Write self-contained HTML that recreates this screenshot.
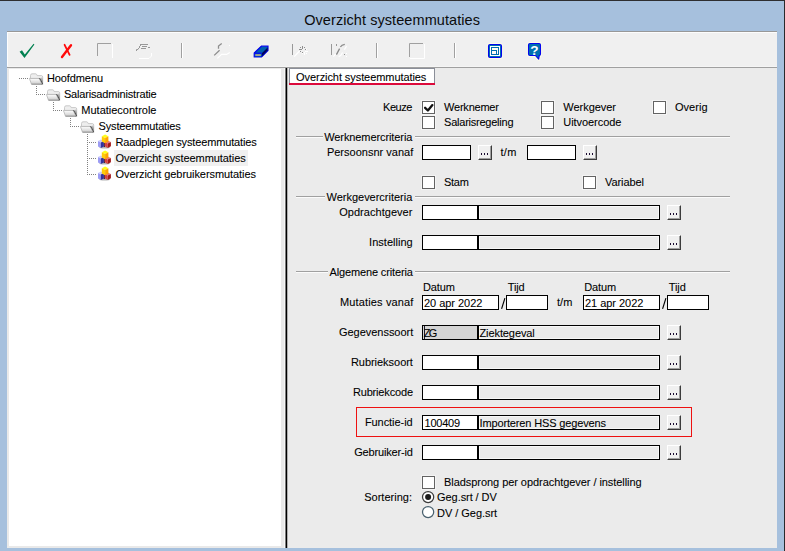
<!DOCTYPE html>
<html><head><meta charset="utf-8"><title>Overzicht systeemmutaties</title>
<style>
html,body{margin:0;padding:0}
body{width:785px;height:551px;overflow:hidden;position:relative;background:#a6c0dd;font-family:"Liberation Sans",sans-serif;font-size:11px;color:#000}
.a{position:absolute}
.t{position:absolute;white-space:pre;line-height:13px;height:13px;font-size:11px;color:#000;-webkit-text-stroke:.08px #000}
.cb{position:absolute;width:11px;height:11px;border:1px solid #636363;background:#fff;box-shadow:0 0 0 1px rgba(255,255,255,.45)}
.in{position:absolute;height:13px;border:1px solid #000;background:#fff}
.ro{position:absolute;height:13px;border:1px solid #000;background:#ebebeb;box-shadow:inset 0 0 0 1px #f8f8f8}
.bt{position:absolute;width:12px;height:13px;background:#f0f0f0;border-top:1px solid #fff;border-left:1px solid #fff;border-right:1px solid #3c3c3c;border-bottom:1px solid #3c3c3c;box-shadow:inset -1px -1px 0 #a0a0a0}
.bt i{position:absolute;top:7px;width:1px;height:2px;background:#1a0a30}
.fl{position:absolute;height:1px;background:#a0a0a0;box-shadow:0 1px 0 #fbfbfb}
.sep{position:absolute;top:43px;width:1px;height:15px;background:#a0a0a0;box-shadow:1px 0 0 #fff}
.hd{position:absolute;height:1px;background-image:linear-gradient(to right,#808080 50%,transparent 50%);background-size:2px 1px}
.vd{position:absolute;width:1px;background-image:linear-gradient(to bottom,#808080 50%,transparent 50%);background-size:1px 2px}
</style></head><body>

<div class="a" style="left:0;top:0;width:785px;height:1px;background:#2e2e30"></div>
<div class="a" style="left:784px;top:0;width:1px;height:551px;background:#2a2a2c"></div>
<div class="a" style="left:7px;top:31px;width:770px;height:36px;background:#f0f0f0;border-top:1px solid #989898;box-sizing:border-box;box-shadow:inset 1px 1px 0 #fdfdfd"></div>
<div class="a" style="left:7px;top:67px;width:770px;height:1px;background:#a0a0a0"></div>
<div class="a" style="left:7px;top:66px;width:770px;height:1px;background:#f5f5f5"></div>
<div class="a" style="left:7px;top:68px;width:278px;height:1px;background:#e9e9e9"></div>
<div class="a" style="left:288px;top:68px;width:489px;height:1px;background:#ebebeb"></div>
<div class="a" style="left:7px;top:69px;width:279px;height:479px;background:#e9e9e9"></div>
<div class="a" style="left:9px;top:69px;width:272px;height:477px;background:#fff"></div>
<div class="a" style="left:284px;top:68px;width:2px;height:480px;background:#f6f6f6"></div>
<div class="a" style="left:285px;top:68px;width:3px;height:480px;background:linear-gradient(to right,#7a7a7a 0,#7a7a7a 1px,#000 1px,#000 2px,#b0b0b0 2px,#b0b0b0 3px)"></div>
<div class="a" style="left:288px;top:69px;width:489px;height:479px;background:#ebebeb"></div>
<div class="a" style="left:289px;top:68px;width:146px;height:17px;background:#fff;border-top:1px solid #8a8e98;border-left:1px solid #8a8e98;border-right:1px solid #8a8e98;box-sizing:border-box"></div>
<div class="a" style="left:289px;top:83px;width:146px;height:2px;background:#dc0a3c"></div>
<div class="a" style="left:114px;top:150px;width:134px;height:16px;background:#f0f0f0"></div>
<div class="cb" style="left:422px;top:101px"></div>
<div class="cb" style="left:422px;top:116px"></div>
<div class="cb" style="left:541px;top:101px"></div>
<div class="cb" style="left:541px;top:116px"></div>
<div class="cb" style="left:653px;top:101px"></div>
<div class="cb" style="left:422px;top:176px"></div>
<div class="cb" style="left:583px;top:176px"></div>
<div class="cb" style="left:422px;top:476px"></div>
<svg class="a" style="left:422px;top:101px" width="13" height="13" viewBox="0 0 13 13"><path d="M3.1 6.8 L5.9 9.5 L10.4 4.1" fill="none" stroke="#111" stroke-width="2.3" stroke-linecap="round" stroke-linejoin="round"/></svg>
<div class="fl" style="left:296px;top:136px;width:27px"></div>
<div class="fl" style="left:415px;top:136px;width:315px"></div>
<div class="fl" style="left:296px;top:196px;width:29px"></div>
<div class="fl" style="left:415px;top:196px;width:315px"></div>
<div class="fl" style="left:296px;top:271px;width:32px"></div>
<div class="fl" style="left:415px;top:271px;width:315px"></div>
<div class="in" style="left:422px;top:145px;width:47px;"></div>
<div class="bt" style="left:478px;top:145px"><i style="left:2px"></i><i style="left:5px"></i><i style="left:8px"></i></div>
<div class="in" style="left:527px;top:145px;width:47px;"></div>
<div class="bt" style="left:583px;top:145px"><i style="left:2px"></i><i style="left:5px"></i><i style="left:8px"></i></div>
<div class="in" style="left:422px;top:205px;width:54px;"></div>
<div class="ro" style="left:478px;top:205px;width:180px;"></div>
<div class="bt" style="left:667px;top:205px"><i style="left:2px"></i><i style="left:5px"></i><i style="left:8px"></i></div>
<div class="in" style="left:422px;top:235px;width:54px;"></div>
<div class="ro" style="left:478px;top:235px;width:180px;"></div>
<div class="bt" style="left:667px;top:235px"><i style="left:2px"></i><i style="left:5px"></i><i style="left:8px"></i></div>
<div class="in" style="left:422px;top:325px;width:54px;background:#d4d4d4"></div>
<div class="a" style="left:424px;top:326px;width:1px;height:13px;background:#1a1a2a"></div>
<div class="ro" style="left:478px;top:325px;width:180px;"></div>
<div class="bt" style="left:667px;top:325px"><i style="left:2px"></i><i style="left:5px"></i><i style="left:8px"></i></div>
<div class="in" style="left:422px;top:355px;width:54px;"></div>
<div class="ro" style="left:478px;top:355px;width:180px;"></div>
<div class="bt" style="left:667px;top:355px"><i style="left:2px"></i><i style="left:5px"></i><i style="left:8px"></i></div>
<div class="in" style="left:422px;top:385px;width:54px;"></div>
<div class="ro" style="left:478px;top:385px;width:180px;"></div>
<div class="bt" style="left:667px;top:385px"><i style="left:2px"></i><i style="left:5px"></i><i style="left:8px"></i></div>
<div class="in" style="left:422px;top:415px;width:54px;"></div>
<div class="ro" style="left:478px;top:415px;width:180px;"></div>
<div class="bt" style="left:667px;top:415px"><i style="left:2px"></i><i style="left:5px"></i><i style="left:8px"></i></div>
<div class="in" style="left:422px;top:445px;width:54px;"></div>
<div class="ro" style="left:478px;top:445px;width:180px;"></div>
<div class="bt" style="left:667px;top:445px"><i style="left:2px"></i><i style="left:5px"></i><i style="left:8px"></i></div>
<div class="in" style="left:422px;top:295px;width:75px;"></div>
<div class="in" style="left:506px;top:295px;width:40px;"></div>
<div class="in" style="left:583px;top:295px;width:75px;"></div>
<div class="in" style="left:667px;top:295px;width:40px;"></div>
<div class="a" style="left:356px;top:407px;width:334px;height:28px;border:1px solid #ee1111"></div>
<svg class="a" style="left:421px;top:490px" width="15" height="30" viewBox="0 0 15 30"><circle cx="7.1" cy="7.1" r="5.6" fill="#fff" stroke="#3c3c3c" stroke-width="1.25"/><circle cx="7.1" cy="7.1" r="3" fill="#1a1a1a"/><circle cx="7.1" cy="22.1" r="5.6" fill="#fff" stroke="#48606e" stroke-width="1.25"/></svg>
<div class="hd" style="left:19px;top:78px;width:10px"></div>
<div class="vd" style="left:36px;top:86px;height:9px"></div>
<div class="hd" style="left:36px;top:94px;width:10px"></div>
<div class="vd" style="left:53px;top:102px;height:9px"></div>
<div class="hd" style="left:53px;top:110px;width:10px"></div>
<div class="vd" style="left:70px;top:118px;height:9px"></div>
<div class="hd" style="left:70px;top:126px;width:10px"></div>
<div class="vd" style="left:87px;top:134px;height:41px"></div>
<div class="hd" style="left:87px;top:142px;width:9px"></div>
<div class="hd" style="left:87px;top:158px;width:9px"></div>
<div class="hd" style="left:87px;top:174px;width:9px"></div>
<svg class="a" style="left:29px;top:72px" width="15" height="13" viewBox="0 0 15 13"><defs><linearGradient id="fg0" x1="0" y1="0" x2="0" y2="1"><stop offset="0" stop-color="#ffffff"/><stop offset="1" stop-color="#cdcdcd"/></linearGradient><linearGradient id="fd0" x1="0" y1="0" x2="0" y2="1"><stop offset="0" stop-color="#dadada"/><stop offset="1" stop-color="#4a4a4a"/></linearGradient></defs>
<path d="M1.5 6.5 L1.5 3.3 Q1.6 1.9 3 1.8 L6.8 1.8 Q7.8 2 8.2 3.6 L12.6 3.6 Q13.7 3.8 13.7 5 L13.7 12.3 L10.3 6.5 Z" fill="#eeeeee" stroke="#bebebe" stroke-width=".8"/>
<path d="M10.3 6.4 L13.6 4.9 L13.6 12.4 Z" fill="url(#fd0)"/>
<path d="M10.2 6.3 L13.3 12.3" stroke="#1c1c1c" stroke-width="1.4"/>
<path d="M0.4 6.4 L10.2 6.4 L13 12 L2.4 12 Z" fill="url(#fg0)" stroke="#aaaaaa" stroke-width=".7"/>
<path d="M2.4 12.3 L13.2 12.3" stroke="#7c7c7c" stroke-width=".7"/></svg>
<svg class="a" style="left:46px;top:88px" width="15" height="13" viewBox="0 0 15 13"><defs><linearGradient id="fg1" x1="0" y1="0" x2="0" y2="1"><stop offset="0" stop-color="#ffffff"/><stop offset="1" stop-color="#cdcdcd"/></linearGradient><linearGradient id="fd1" x1="0" y1="0" x2="0" y2="1"><stop offset="0" stop-color="#dadada"/><stop offset="1" stop-color="#4a4a4a"/></linearGradient></defs>
<path d="M1.5 6.5 L1.5 3.3 Q1.6 1.9 3 1.8 L6.8 1.8 Q7.8 2 8.2 3.6 L12.6 3.6 Q13.7 3.8 13.7 5 L13.7 12.3 L10.3 6.5 Z" fill="#eeeeee" stroke="#bebebe" stroke-width=".8"/>
<path d="M10.3 6.4 L13.6 4.9 L13.6 12.4 Z" fill="url(#fd1)"/>
<path d="M10.2 6.3 L13.3 12.3" stroke="#1c1c1c" stroke-width="1.4"/>
<path d="M0.4 6.4 L10.2 6.4 L13 12 L2.4 12 Z" fill="url(#fg1)" stroke="#aaaaaa" stroke-width=".7"/>
<path d="M2.4 12.3 L13.2 12.3" stroke="#7c7c7c" stroke-width=".7"/></svg>
<svg class="a" style="left:63px;top:104px" width="15" height="13" viewBox="0 0 15 13"><defs><linearGradient id="fg2" x1="0" y1="0" x2="0" y2="1"><stop offset="0" stop-color="#ffffff"/><stop offset="1" stop-color="#cdcdcd"/></linearGradient><linearGradient id="fd2" x1="0" y1="0" x2="0" y2="1"><stop offset="0" stop-color="#dadada"/><stop offset="1" stop-color="#4a4a4a"/></linearGradient></defs>
<path d="M1.5 6.5 L1.5 3.3 Q1.6 1.9 3 1.8 L6.8 1.8 Q7.8 2 8.2 3.6 L12.6 3.6 Q13.7 3.8 13.7 5 L13.7 12.3 L10.3 6.5 Z" fill="#eeeeee" stroke="#bebebe" stroke-width=".8"/>
<path d="M10.3 6.4 L13.6 4.9 L13.6 12.4 Z" fill="url(#fd2)"/>
<path d="M10.2 6.3 L13.3 12.3" stroke="#1c1c1c" stroke-width="1.4"/>
<path d="M0.4 6.4 L10.2 6.4 L13 12 L2.4 12 Z" fill="url(#fg2)" stroke="#aaaaaa" stroke-width=".7"/>
<path d="M2.4 12.3 L13.2 12.3" stroke="#7c7c7c" stroke-width=".7"/></svg>
<svg class="a" style="left:80px;top:120px" width="15" height="13" viewBox="0 0 15 13"><defs><linearGradient id="fg3" x1="0" y1="0" x2="0" y2="1"><stop offset="0" stop-color="#ffffff"/><stop offset="1" stop-color="#cdcdcd"/></linearGradient><linearGradient id="fd3" x1="0" y1="0" x2="0" y2="1"><stop offset="0" stop-color="#dadada"/><stop offset="1" stop-color="#4a4a4a"/></linearGradient></defs>
<path d="M1.5 6.5 L1.5 3.3 Q1.6 1.9 3 1.8 L6.8 1.8 Q7.8 2 8.2 3.6 L12.6 3.6 Q13.7 3.8 13.7 5 L13.7 12.3 L10.3 6.5 Z" fill="#eeeeee" stroke="#bebebe" stroke-width=".8"/>
<path d="M10.3 6.4 L13.6 4.9 L13.6 12.4 Z" fill="url(#fd3)"/>
<path d="M10.2 6.3 L13.3 12.3" stroke="#1c1c1c" stroke-width="1.4"/>
<path d="M0.4 6.4 L10.2 6.4 L13 12 L2.4 12 Z" fill="url(#fg3)" stroke="#aaaaaa" stroke-width=".7"/>
<path d="M2.4 12.3 L13.2 12.3" stroke="#7c7c7c" stroke-width=".7"/></svg>
<svg class="a" style="left:97px;top:134px" width="15" height="15" viewBox="0 0 15 15">
<ellipse cx="7.6" cy="13.5" rx="5.2" ry="1.1" fill="#444" opacity=".4"/>
<path d="M6.6 8.6 L8 8.6 L8 13 L6.6 13Z" fill="#2a2038"/>
<path d="M1 7 L3.8 5.6 L6.8 7 L3.8 8.4Z" fill="#ccccff"/><path d="M1 7 L3.8 8.4 L3.8 13.9 L1 12.5Z" fill="#9c9cf4"/><path d="M3.8 8.4 L6.9 7 L6.9 12.5 L3.8 13.9Z" fill="#34349c"/>
<path d="M7.6 8 L10.7 6.4 L13.9 8 L10.7 9.6Z" fill="#ea7878"/><path d="M7.6 8 L10.7 9.6 L10.7 13.9 L7.6 12.3Z" fill="#d94040"/><path d="M10.7 9.6 L13.9 8 L13.9 12.3 L10.7 13.9Z" fill="#a41818"/>
<path d="M4.8 2.2 L8.1 .5 L11.4 2.2 L8.1 3.9Z" fill="#ffff18"/><path d="M4.8 2.2 L8.1 3.9 L8.1 9.3 L4.8 7.6Z" fill="#ffcc08"/><path d="M8.1 3.9 L11.4 2.2 L11.4 7.6 L8.1 9.3Z" fill="#ffa600"/>
</svg>
<svg class="a" style="left:97px;top:150px" width="15" height="15" viewBox="0 0 15 15">
<ellipse cx="7.6" cy="13.5" rx="5.2" ry="1.1" fill="#444" opacity=".4"/>
<path d="M6.6 8.6 L8 8.6 L8 13 L6.6 13Z" fill="#2a2038"/>
<path d="M1 7 L3.8 5.6 L6.8 7 L3.8 8.4Z" fill="#ccccff"/><path d="M1 7 L3.8 8.4 L3.8 13.9 L1 12.5Z" fill="#9c9cf4"/><path d="M3.8 8.4 L6.9 7 L6.9 12.5 L3.8 13.9Z" fill="#34349c"/>
<path d="M7.6 8 L10.7 6.4 L13.9 8 L10.7 9.6Z" fill="#ea7878"/><path d="M7.6 8 L10.7 9.6 L10.7 13.9 L7.6 12.3Z" fill="#d94040"/><path d="M10.7 9.6 L13.9 8 L13.9 12.3 L10.7 13.9Z" fill="#a41818"/>
<path d="M4.8 2.2 L8.1 .5 L11.4 2.2 L8.1 3.9Z" fill="#ffff18"/><path d="M4.8 2.2 L8.1 3.9 L8.1 9.3 L4.8 7.6Z" fill="#ffcc08"/><path d="M8.1 3.9 L11.4 2.2 L11.4 7.6 L8.1 9.3Z" fill="#ffa600"/>
</svg>
<svg class="a" style="left:97px;top:166px" width="15" height="15" viewBox="0 0 15 15">
<ellipse cx="7.6" cy="13.5" rx="5.2" ry="1.1" fill="#444" opacity=".4"/>
<path d="M6.6 8.6 L8 8.6 L8 13 L6.6 13Z" fill="#2a2038"/>
<path d="M1 7 L3.8 5.6 L6.8 7 L3.8 8.4Z" fill="#ccccff"/><path d="M1 7 L3.8 8.4 L3.8 13.9 L1 12.5Z" fill="#9c9cf4"/><path d="M3.8 8.4 L6.9 7 L6.9 12.5 L3.8 13.9Z" fill="#34349c"/>
<path d="M7.6 8 L10.7 6.4 L13.9 8 L10.7 9.6Z" fill="#ea7878"/><path d="M7.6 8 L10.7 9.6 L10.7 13.9 L7.6 12.3Z" fill="#d94040"/><path d="M10.7 9.6 L13.9 8 L13.9 12.3 L10.7 13.9Z" fill="#a41818"/>
<path d="M4.8 2.2 L8.1 .5 L11.4 2.2 L8.1 3.9Z" fill="#ffff18"/><path d="M4.8 2.2 L8.1 3.9 L8.1 9.3 L4.8 7.6Z" fill="#ffcc08"/><path d="M8.1 3.9 L11.4 2.2 L11.4 7.6 L8.1 9.3Z" fill="#ffa600"/>
</svg>
<svg class="a" style="left:7px;top:32px" width="770" height="35" viewBox="7 32 770 35">
<path d="M19.6 51.7 L22 50.3 L24.8 54.5 L33.6 43.8 L34.4 44.4 L24.5 58.1 Z" fill="#008050"/>
<path d="M71 45.3 L62 57" stroke="#ff0a0a" stroke-width="2.4" stroke-linecap="round"/>
<path d="M64.6 44.8 L69.6 54.8" stroke="#ff0a0a" stroke-width="1.8" stroke-linecap="round"/>
<g fill="none" stroke-width="1">
<path d="M97.5 56 L97.5 43.5 L111 43.5" stroke="#a0a0a0"/><path d="M112.5 44 L112.5 58" stroke="#fff"/>
<path d="M409.5 57 L409.5 43.5 L423 43.5" stroke="#a0a0a0"/><path d="M424.5 44 L424.5 58.5 L410 58.5" stroke="#fff"/>
<path d="M140 44.5 H148 M142 46.5 H147 M148 47.5 H150 M141 48.5 H146 M140.5 45 V46 M139.5 46 V48 M138 48.5 H139 M136.5 49.5 H138.2 M136.5 49.5 V51" stroke="#989898"/>
<path d="M151.5 53 V56 L149 58.5 H139" stroke="#fff"/>
<path d="M221.7 43.4 L218.5 46 L218.5 48.8 M219.6 50.2 L214.2 55.4" stroke="#8e8e8e" stroke-width="1.3"/>
<path d="M217.4 58.4 L221.6 54.4 L226.6 54.4 L229.8 52.4 M229 45.5 L230 45.5" stroke="#fff" stroke-width="1.2"/>
<path d="M292.5 44 V55" stroke="#989898"/><path d="M294.2 56.6 L299.6 51" stroke="#fff" stroke-width="1.3"/>
<path d="M300 47.5 H301 M302.5 46 V49 M304 47.5 H305 M299 49.5 H302 M305 49.5 H306 M300 51.5 H301 M302 52.5 H303" stroke="#8e8e8e"/>
<path d="M306 49.5 H307 M302 53.5 H303 M304.5 52 V55 M305 51.5 H308 M306 53.5 H307" stroke="#fff"/>
<path d="M331.5 44 V55 M336.5 44 V46" stroke="#989898"/><path d="M344.8 44.4 Q341.6 44.8 340.4 47 M339.6 48.6 L336.4 54.6" stroke="#8a8a8a" stroke-width="1.3"/><path d="M344 54.5 H345" stroke="#8e8e8e"/>
<path d="M333.4 56.6 L335.6 54 M338.6 56.6 Q341 56 342.6 52.4 M344.4 49.6 L346.6 46 M346 53.5 H347 M346 56.5 H347" stroke="#fff" stroke-width="1.2"/>
</g>
<path d="M254.2 53 L261.4 46.2 L268 46.2 L268 50.4 L261.6 57 L254.2 57Z" fill="none" stroke="#fdfde4" stroke-width="2.6" stroke-linejoin="round"/>
<path d="M254.2 53 L261.4 46.2 L268 46.2 L268 50.4 L261.6 57 L254.2 57Z" fill="#0060b0" stroke="#0404f0" stroke-width="1.2" stroke-linejoin="miter"/>
<path d="M261.8 53.2 L267.6 47.4 L267.6 50.4 L261.8 56.4Z" fill="#000060"/>
<path d="M254.4 53.2 L261.8 53.2" stroke="#0404f0" stroke-width="1.2"/>
<rect x="255.3" y="54.2" width="5.5" height="1.7" fill="#b4ac84"/>
<rect x="488.5" y="44.5" width="13" height="13" rx="1.6" fill="none" stroke="#fdfde6" stroke-width="2.8"/>
<rect x="488.5" y="44.5" width="13" height="13" rx="1.6" fill="#0070b0" stroke="#0404f0" stroke-width="1.1"/>
<rect x="490" y="46" width="10" height="10" fill="#fff"/>
<rect x="491" y="47" width="8" height="8" fill="#0070b0"/>
<rect x="492" y="48" width="6" height="6" fill="#fffdf6"/>
<path d="M492 50.5 H496.5 M496.5 50 V54" fill="none" stroke="#0070b0" stroke-width="1"/>
<path d="M530 43.5 L539 43.5 Q540.5 43.5 540.5 45 L540.5 54 Q540.5 55.5 539 55.5 L539.3 55.5 L538.7 59.2 L535.4 55.5 L530 55.5 Q528.5 55.5 528.5 54 L528.5 45 Q528.5 43.5 530 43.5Z" fill="none" stroke="#fdfde6" stroke-width="2.8" stroke-linejoin="round"/>
<path d="M530 43.5 L539 43.5 Q540.5 43.5 540.5 45 L540.5 54 Q540.5 55.5 539 55.5 L539.3 55.5 L538.7 59.2 L535.4 55.5 L530 55.5 Q528.5 55.5 528.5 54 L528.5 45 Q528.5 43.5 530 43.5Z" fill="#0070b0" stroke="#0404f0" stroke-width="1.1" stroke-linejoin="round"/>
<text x="534.5" y="54.8" font-family="Liberation Sans" font-weight="bold" font-size="13.6" fill="#fff" text-anchor="middle">?</text>
</svg>
<div class="sep" style="left:181px"></div>
<div class="sep" style="left:376px"></div>
<div class="sep" style="left:454px"></div>
<span class="t" style="left:304.2px;top:12px;font-size:14.5px;line-height:17px;height:17px;-webkit-text-stroke:0;color:#0c0c0c;letter-spacing:0.070px">Overzicht systeemmutaties</span>
<span class="t" style="left:47.0px;top:72px;letter-spacing:-0.108px">Hoofdmenu</span>
<span class="t" style="left:63.9px;top:88px;letter-spacing:-0.169px">Salarisadministratie</span>
<span class="t" style="left:81.3px;top:104px;letter-spacing:-0.001px">Mutatiecontrole</span>
<span class="t" style="left:98.6px;top:120px;letter-spacing:-0.158px">Systeemmutaties</span>
<span class="t" style="left:115.5px;top:136px;letter-spacing:-0.147px">Raadplegen systeemmutaties</span>
<span class="t" style="left:115.5px;top:152px;letter-spacing:-0.078px">Overzicht systeemmutaties</span>
<span class="t" style="left:115.5px;top:168px;letter-spacing:-0.073px">Overzicht gebruikersmutaties</span>
<span class="t" style="left:296.1px;top:71px;letter-spacing:-0.074px">Overzicht systeemmutaties</span>
<span class="t" style="left:383.0px;top:101px;letter-spacing:-0.441px">Keuze</span>
<span class="t" style="left:444.1px;top:101px;letter-spacing:-0.228px">Werknemer</span>
<span class="t" style="left:444.1px;top:116px;letter-spacing:-0.238px">Salarisregeling</span>
<span class="t" style="left:563.3px;top:101px;letter-spacing:-0.032px">Werkgever</span>
<span class="t" style="left:563.3px;top:116px;letter-spacing:-0.064px">Uitvoercode</span>
<span class="t" style="left:675.0px;top:101px;letter-spacing:0.032px">Overig</span>
<span class="t" style="left:324.2px;top:131px;letter-spacing:-0.092px">Werknemercriteria</span>
<span class="t" style="left:326.9px;top:146px;letter-spacing:0.011px">Persoonsnr vanaf</span>
<span class="t" style="left:500.5px;top:146px;letter-spacing:0.306px">t/m</span>
<span class="t" style="left:443.9px;top:176px;letter-spacing:-0.222px">Stam</span>
<span class="t" style="left:605.0px;top:176px;letter-spacing:-0.068px">Variabel</span>
<span class="t" style="left:326.5px;top:191px;letter-spacing:-0.012px">Werkgevercriteria</span>
<span class="t" style="left:339.2px;top:206px;letter-spacing:0.041px">Opdrachtgever</span>
<span class="t" style="left:369.1px;top:236px;letter-spacing:0.018px">Instelling</span>
<span class="t" style="left:329.5px;top:266px;letter-spacing:-0.141px">Algemene criteria</span>
<span class="t" style="left:422.9px;top:281px;letter-spacing:-0.121px">Datum</span>
<span class="t" style="left:507.8px;top:281px;letter-spacing:-0.132px">Tijd</span>
<span class="t" style="left:584.3px;top:281px;letter-spacing:-0.161px">Datum</span>
<span class="t" style="left:668.7px;top:281px;letter-spacing:-0.057px">Tijd</span>
<span class="t" style="left:339.9px;top:296px;letter-spacing:0.154px">Mutaties vanaf</span>
<span class="t" style="left:424.0px;top:297px;letter-spacing:-0.038px">20 apr 2022</span>
<svg class="a" style="left:499.7px;top:297px" width="6" height="13" viewBox="0 0 6 13"><path d="M4.9 1.2 L1.6 11.9" stroke="#000" stroke-width="1.15"/></svg>
<span class="t" style="left:556.9px;top:296px;letter-spacing:0.173px">t/m</span>
<span class="t" style="left:585.0px;top:297px;letter-spacing:-0.038px">21 apr 2022</span>
<svg class="a" style="left:660.7px;top:297px" width="6" height="13" viewBox="0 0 6 13"><path d="M4.9 1.2 L1.6 11.9" stroke="#000" stroke-width="1.15"/></svg>
<span class="t" style="left:339.0px;top:326px;letter-spacing:-0.031px">Gegevenssoort</span>
<span class="t" style="left:423.8px;top:327px;letter-spacing:-1.741px">ZG</span>
<span class="t" style="left:479.5px;top:327px;letter-spacing:-0.097px">Ziektegeval</span>
<span class="t" style="left:350.9px;top:356px;letter-spacing:-0.030px">Rubrieksoort</span>
<span class="t" style="left:352.9px;top:386px;letter-spacing:-0.161px">Rubriekcode</span>
<span class="t" style="left:364.9px;top:416px;letter-spacing:-0.060px">Functie-id</span>
<span class="t" style="left:424.5px;top:417px;letter-spacing:-0.236px">100409</span>
<span class="t" style="left:479.5px;top:417px;letter-spacing:-0.141px">Importeren HSS gegevens</span>
<span class="t" style="left:354.2px;top:446px;letter-spacing:-0.169px">Gebruiker-id</span>
<span class="t" style="left:444.1px;top:476px;letter-spacing:-0.060px">Bladsprong per opdrachtgever / instelling</span>
<span class="t" style="left:364.2px;top:491px;letter-spacing:0.020px">Sortering:</span>
<span class="t" style="left:437.1px;top:491px;letter-spacing:-0.078px">Geg.srt / DV</span>
<span class="t" style="left:437.1px;top:507px;letter-spacing:-0.044px">DV / Geg.srt</span>
</body></html>
